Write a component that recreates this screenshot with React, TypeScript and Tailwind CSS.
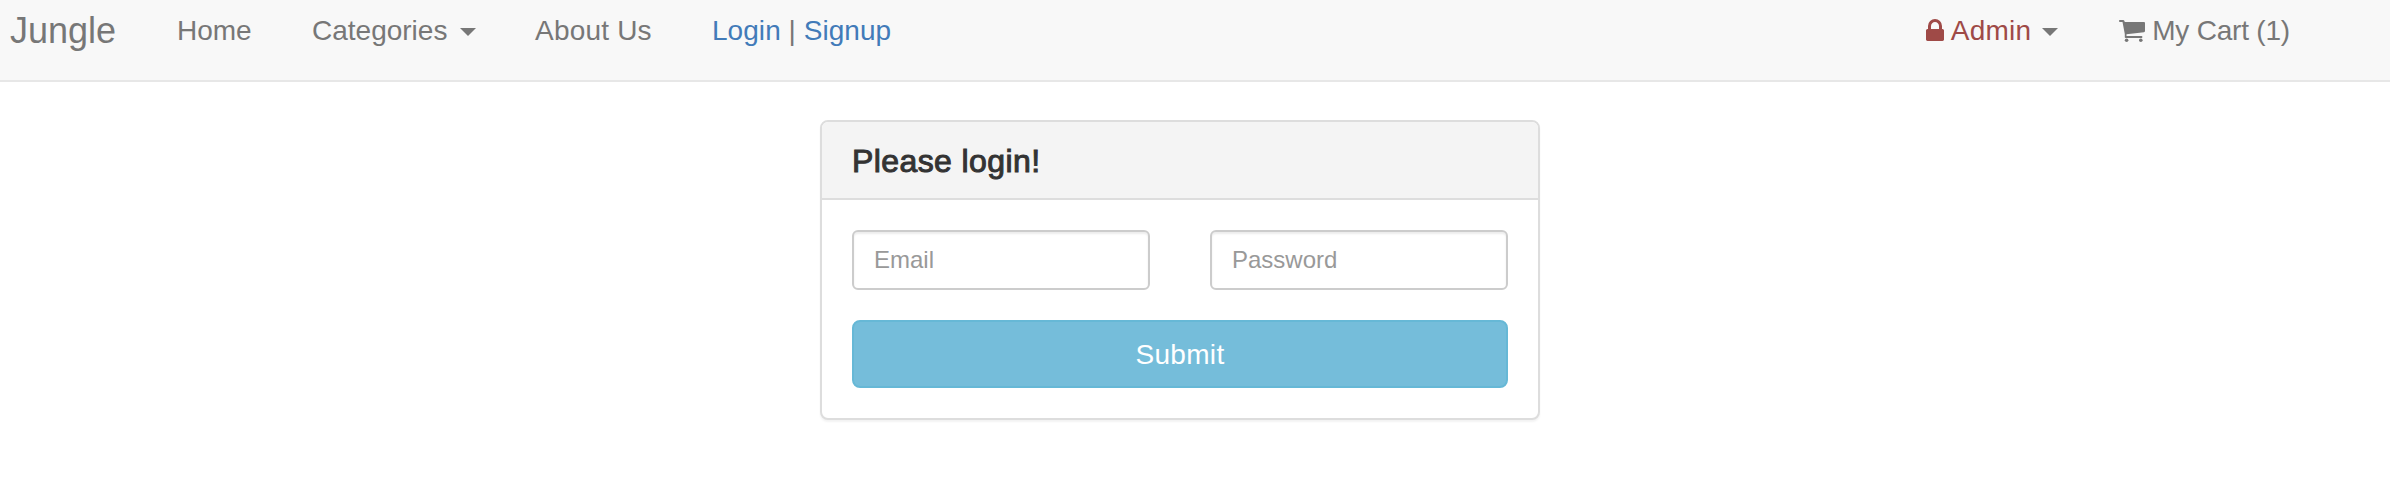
import React from "react";

function Caret({ className = "" }: { className?: string }) {
  return (
    <svg viewBox="0 0 16 8" className={`h-2 w-4 shrink-0 ${className}`} fill="#777777">
      <path d="M0 0h16L8 8z" />
    </svg>
  );
}

function LockIcon() {
  return (
    <svg viewBox="320 128 1152 1408" className="mr-[7px] mb-[3px] h-[22px] w-[18px] shrink-0" fill="currentColor">
      <path d="M640 768h512v-192q0-106-75-181t-181-75-181 75-75 181v192zm832 96v576q0 40-28 68t-68 28h-960q-40 0-68-28t-28-68v-576q0-40 28-68t68-28h32v-192q0-184 132-316t316-132 316 132 132 316v192h32q40 0 68 28t28 68z" />
    </svg>
  );
}

function CartIcon() {
  return (
    <svg viewBox="0 0 26 22" className="mr-[7px] h-[22px] w-[26px] shrink-0" fill="currentColor">
      <path d="M0 .8Q0 0 .8 0H4.2Q5 0 5.3.8L5.8 2H25Q26 2 26 3V11Q26 12 25 12.2L7.5 14.2V16H22.6Q23.4 16 23.4 17T22.6 18H6.6Q5.8 18 5.8 17.2V14L3.5 2H.8Q0 2 0 .8Z" />
      <circle cx="7.6" cy="20.2" r="1.8" />
      <circle cx="21.8" cy="20.2" r="1.8" />
    </svg>
  );
}

function Navbar() {
  return (
    <nav className="flex h-[82px] items-start justify-between border-b-2 border-[#e7e7e7] bg-[#f8f8f8] pr-[100px] pl-[10px] text-[28px] leading-10 whitespace-pre text-[#777777]">
      <div className="flex pt-[11px]">
        <a className="w-[167px] text-[36px]">Jungle</a>
        <a className="w-[135px]">Home</a>
        <a className="flex w-[223px] items-center">
          Categories
          <Caret className="mt-0.5 ml-[13px]" />
        </a>
        <a className="w-[177px] tracking-[0.2px]">About Us</a>
        <div className="tracking-[0.05px]">
          <a className="text-[#427bb9]">Login</a> | <a className="text-[#427bb9]">Signup</a>
        </div>
      </div>
      <div className="flex gap-[61px] pt-[11px]">
        <a className="flex items-center text-[#9f4a47]">
          <LockIcon />
          <span className="tracking-[0.2px]">Admin</span>
          <Caret className="mt-0.5 ml-[11px]" />
        </a>
        <a className="flex items-center">
          <CartIcon />
          <span className="tracking-[-0.2px]">My Cart (1)</span>
        </a>
      </div>
    </nav>
  );
}

const inputClass =
  "h-[60px] w-[298px] rounded-[6px] border-2 border-[#cccccc] bg-white px-5 text-[24px] text-[#555555] shadow-[inset_0_2px_2px_rgba(0,0,0,0.075)] outline-none placeholder:text-[#999999]";

function LoginPanel() {
  return (
    <section className="ml-[820px] h-[300px] w-[720px] rounded-lg border-2 border-[#dddddd] bg-white shadow-[0_2px_2px_rgba(0,0,0,0.05)]">
      <header className="flex h-[78px] items-center rounded-t-[6px] border-b-2 border-[#dddddd] bg-[#f4f4f4] px-[30px]">
        <h3 className="pt-px text-[32px] leading-9 tracking-[0.4px] text-[#333333] [-webkit-text-stroke:1px_#333333]">Please login!</h3>
      </header>
      <form className="px-[30px] pt-[30px]" onSubmit={(e) => e.preventDefault()}>
        <div className="flex justify-between">
          <input type="email" placeholder="Email" className={inputClass} />
          <input type="password" placeholder="Password" className={inputClass} />
        </div>
        <button type="submit" className="mt-[30px] h-[68px] w-full rounded-lg border-2 border-[#66b8d6] bg-[#75bdda] pt-0.5 text-[28px] tracking-[0.3px] text-white">
          Submit
        </button>
      </form>
    </section>
  );
}

export default function App() {
  return (
    <div className="flex min-h-screen flex-col gap-[38px] bg-white font-['Liberation_Sans',sans-serif]">
      <Navbar />
      <LoginPanel />
    </div>
  );
}
